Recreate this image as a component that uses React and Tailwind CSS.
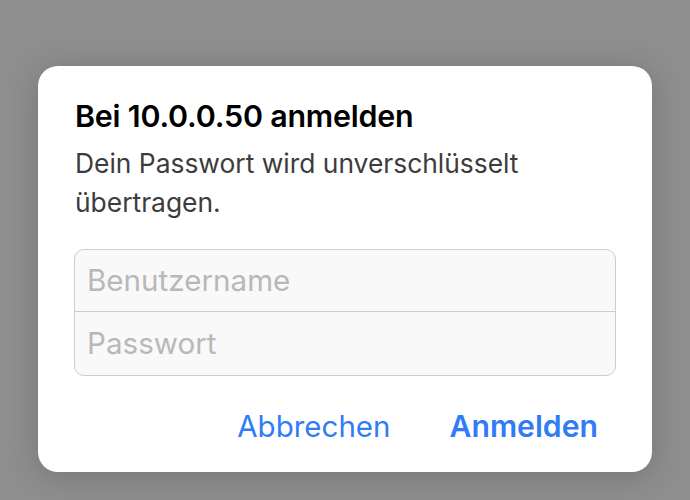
export default function App() {
  return (
    <div
      className="h-[500px] w-[690px] overflow-hidden bg-[#8e8e8e] pt-[66px] pl-[38px]"
      style={{ fontFamily: "Inter, 'Noto Sans', sans-serif" }}
    >
      <div className="flex h-[406px] w-[614px] flex-col rounded-[20px] bg-white px-[36px] pt-[30px] shadow-[0_4px_30px_rgba(0,0,0,0.18)]">
        <div className="pl-[1px] text-[30.4px] font-semibold leading-[40px] tracking-[-0.2px] text-black">
          Bei 10.0.0.50 anmelden
        </div>
        <div className="mt-[8px] pl-[1px] text-[26.4px] leading-[39px] text-[#3c3c3c]">
          Dein Passwort wird unverschlüsselt übertragen.
        </div>
        <div className="mt-[27px] flex flex-col rounded-[10px] border border-[#cdcdcd] bg-[#f9f9f9]">
          <div className="flex h-[62px] items-center border-b border-[#cdcdcd] px-[12px] text-[29.6px] text-[#b8b8b8]">
            Benutzername
          </div>
          <div className="flex h-[63px] items-center px-[12px] text-[29.6px] text-[#b8b8b8]">
            Passwort
          </div>
        </div>
        <div className="mt-[32px] flex justify-end gap-[59px] pr-[18px] text-[29.5px] leading-[36px] text-[#2f7cf6]">
          <span>Abbrechen</span>
          <span className="text-[30.2px] font-semibold">Anmelden</span>
        </div>
      </div>
    </div>
  );
}
